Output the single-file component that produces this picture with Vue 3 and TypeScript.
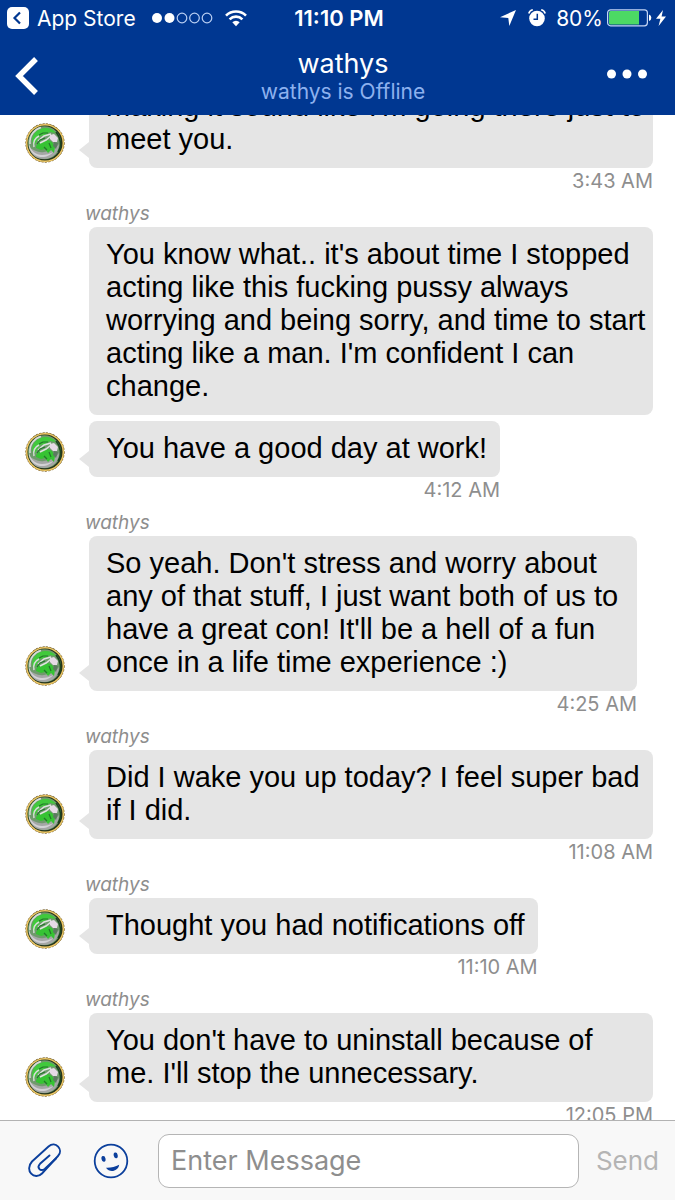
<script setup lang="ts">
import { ref } from 'vue'

interface Message {
  id: number
  text: string
  size: 'full' | 'wide' | 'fit'
  sender?: string
  time?: string
}

const contact = 'wathys'
const draft = ref('')

const messages: Message[] = [
  { id: 1, text: "making it sound like I'm going there just to\nmeet you.", size: 'full', time: '3:43 AM' },
  {
    id: 2,
    text: "You know what.. it's about time I stopped\nacting like this fucking pussy always\nworrying and being sorry, and time to start\nacting like a man. I'm confident I can\nchange.",
    size: 'full',
    sender: contact,
  },
  { id: 3, text: 'You have a good day at work!', size: 'fit', time: '4:12 AM' },
  {
    id: 4,
    text: "So yeah. Don't stress and worry about\nany of that stuff, I just want both of us to\nhave a great con! It'll be a hell of a fun\nonce in a life time experience :)",
    size: 'wide',
    sender: contact,
    time: '4:25 AM',
  },
  { id: 5, text: 'Did I wake you up today? I feel super bad\nif I did.', size: 'full', sender: contact, time: '11:08 AM' },
  { id: 6, text: 'Thought you had notifications off', size: 'fit', sender: contact, time: '11:10 AM' },
  {
    id: 7,
    text: "You don't have to uninstall because of\nme. I'll stop the unnecessary.",
    size: 'full',
    sender: contact,
    time: '12:05 PM',
  },
]
</script>

<template>
  <div class="app">
    <header class="top">
      <div class="status">
        <div class="status-left">
          <svg class="store" viewBox="0 0 22 22" aria-hidden="true">
            <rect width="22" height="22" rx="5" fill="#fff" />
            <path d="M13 5.500 7.500 11l5.500 5.500" fill="none" stroke="#003791" stroke-width="2.200" />
          </svg>
          <span class="store-label">App Store</span>
          <svg class="signal" viewBox="0 0 62 12" aria-hidden="true">
            <circle cx="6" cy="6" r="5" fill="#fff" />
            <circle cx="18.500" cy="6" r="5" fill="#fff" />
            <g fill="none" stroke="#b9cff3" stroke-width="1.200">
              <circle cx="31" cy="6" r="4.800" />
              <circle cx="43.500" cy="6" r="4.800" />
              <circle cx="56" cy="6" r="4.800" />
            </g>
          </svg>
          <svg class="wifi" viewBox="0 0 22 17" aria-hidden="true">
            <g fill="none" stroke="#fff" stroke-width="2.600">
              <path d="M1 5.600a14.200 14.200 0 0 1 20 0" />
              <path d="M4.600 9.300a9 9 0 0 1 12.800 0" />
            </g>
            <path d="M7.300 12.300a5.200 5.200 0 0 1 7.400 0L11 16.200z" fill="#fff" />
          </svg>
        </div>
        <div class="clock">11:10 PM</div>
        <div class="status-right">
          <svg class="location" viewBox="0 0 16 16" aria-hidden="true">
            <path d="M16 0 9.300 16 8.300 8 0 7.200z" fill="#fff" />
          </svg>
          <svg class="alarm" viewBox="0 0 18 18" aria-hidden="true">
            <circle cx="9" cy="9.500" r="7.800" fill="#fff" />
            <path d="M.8 4.500A5 5 0 0 1 4.800.8M17.200 4.500a5 5 0 0 0-4-3.700" fill="none" stroke="#fff" stroke-width="1.600" />
            <path d="M9.300 4.800v5.400H5.500" fill="none" stroke="#003791" stroke-width="1.500" />
          </svg>
          <span class="percent">80%</span>
          <svg class="battery" viewBox="0 0 45 18" aria-hidden="true">
            <rect x=".6" y=".8" width="39.800" height="16" rx="3" fill="none" stroke="#c5d6f5" stroke-width="1.200" />
            <path d="M3.500 2h28.500v13.600H3.500A1.500 1.500 0 0 1 2 14.100V3.500A1.500 1.500 0 0 1 3.500 2z" fill="#4cd964" />
            <path d="M42 5.500a3.500 3.500 0 0 1 0 6.600z" fill="#fff" />
          </svg>
          <svg class="bolt" viewBox="0 0 10 16" aria-hidden="true">
            <path d="M7 0 0 8.800h4.400L2.600 16 10 6.600H5.600z" fill="#fff" />
          </svg>
        </div>
      </div>
      <div class="nav">
        <button class="back" type="button" aria-label="Back">
          <svg viewBox="0 0 24 38" aria-hidden="true">
            <path d="M22 2 5 19l17 17" fill="none" stroke="#fff" stroke-width="5.400" />
          </svg>
        </button>
        <div class="title">
          <h1>{{ contact }}</h1>
          <p>{{ contact }} is Offline</p>
        </div>
        <button class="more" type="button" aria-label="More options">
          <svg viewBox="0 0 40 10" aria-hidden="true">
            <g fill="#fff">
              <circle cx="4.500" cy="5" r="4.500" />
              <circle cx="20" cy="5" r="4.500" />
              <circle cx="35.500" cy="5" r="4.500" />
            </g>
          </svg>
        </button>
      </div>
    </header>

    <main class="chat">
      <article v-for="m in messages" :key="m.id" class="message" :class="[m.size, { tight: !m.time }]">
        <div v-if="m.sender" class="sender">{{ m.sender }}</div>
        <div class="row">
          <svg v-if="m.time" class="avatar" viewBox="0 0 40 40" aria-hidden="true">
            <circle cx="20" cy="20" r="19.200" fill="#26351c" stroke="#8a6a2c" stroke-width="1" stroke-dasharray="2 1.500" />
            <circle cx="20" cy="20" r="18.300" fill="none" stroke="#eec765" stroke-width="1.500" />
            <circle cx="19.500" cy="19.800" r="16.500" fill="#6f9a6c" />
            <path d="M4 24c4 3 9 6 15 5s11-3 15-8c0 9-7 15-15 15S6 32 4 24z" fill="#a5a7a6" />
            <path d="M4 20c1 8 7 12 13 12 4 0 8-1 11-3-4 6-19 9-24-5z" fill="#d3d2d6" />
            <path d="M7 18C7 10 14 5 20 5c5 0 9 2 11 5l-6-1-5 3-5 1-3 5-3 5z" fill="#41c93c" />
            <path d="M11 25c0-4 3-6 7-6l5-2 4 2 3 5-1 6-3-3-3 3-3-4-4 1z" fill="#36c333" />
            <path d="M5 21C4 12 10 6 16 4.500M9 24c-1-5 1-9 5-11" fill="none" stroke="#d9dbda" stroke-width="1.500" />
            <path d="M13 18l6-5 7-2M15 20l6-3 5-4" fill="none" stroke="#dfe3df" stroke-width="1.500" />
            <path d="M14 12l4-2 5 0M12 21l3-4 5-2M19 24l3 3M24 20l2 5" fill="none" stroke="#23762a" stroke-width="1.200" />
            <path d="M25 12l4-1 4 4-1 4-4 0-3-3z" fill="#e6dae6" />
            <path d="M29 19l4 1-2 6-3-3z" fill="#5c7a60" />
            <path d="M31 9c5 6 6 14 2 20" fill="none" stroke="#1c4420" stroke-width="1.500" />
          </svg>
          <div class="bubble">{{ m.text }}</div>
        </div>
        <time v-if="m.time" class="time">{{ m.time }}</time>
      </article>
    </main>

    <form class="composer" @submit.prevent>
      <button class="attach" type="button" aria-label="Attach file">
        <svg viewBox="0 0 36 36" aria-hidden="true">
          <g fill="none" stroke="#0b3f9c" stroke-width="1.900" stroke-linecap="round">
            <path d="M5 18.500 21.500 3.500c7-6 15.500 3 9.500 9.500L15 30.500C7.500 38-3 27.500 5 18.500z" />
            <path d="M22.500 12.500 13 20.800c-3.500 3.500 0 8.200 4.700 5.200L29 15.500" />
          </g>
        </svg>
      </button>
      <button class="emoji" type="button" aria-label="Insert emoji">
        <svg viewBox="0 0 36 36" aria-hidden="true">
          <circle cx="18" cy="18" r="16.300" fill="none" stroke="#0b3f9c" stroke-width="1.800" />
          <ellipse cx="10.500" cy="15.800" rx="2" ry="2.900" transform="rotate(-12 10.500 15.800)" fill="#0b3f9c" />
          <ellipse cx="22.700" cy="12.300" rx="2" ry="2.900" transform="rotate(-12 22.700 12.300)" fill="#0b3f9c" />
          <path d="M13 24.800c5 .2 9-.8 13.200-3-1 6.500-9.400 8.700-13.200 3z" fill="#0b3f9c" />
        </svg>
      </button>
      <input v-model="draft" class="entry" type="text" placeholder="Enter Message" aria-label="Enter Message" />
      <button class="send" type="submit">Send</button>
    </form>
  </div>
</template>

<style>
body {
  margin: 0;
}
</style>

<style scoped>
.app {
  display: flex;
  flex-direction: column;
  height: 100vh;
  background: #fff;
  font-family: Inter, "Liberation Sans", sans-serif;
  overflow: hidden;
}
svg {
  display: block;
  flex: none;
}
button {
  display: flex;
  align-items: center;
  justify-content: center;
  padding: 0;
  border: 0;
  background: none;
  font-family: inherit;
}
.top {
  flex: none;
  height: 115px;
  background: #003791;
  color: #fff;
}
.status {
  display: grid;
  grid-template-columns: 1fr auto 1fr;
  align-items: center;
  height: 36px;
  padding: 0 9px 0 7px;
  font-size: 21px;
}
.status-left,
.status-right {
  display: flex;
  align-items: center;
}
.status-right {
  justify-content: flex-end;
}
.store {
  width: 22px;
  margin-right: 8px;
}
.signal {
  width: 62px;
  margin: 0 12px 0 15px;
}
.wifi {
  width: 22px;
}
.clock {
  padding-left: 5px;
  font-weight: 600;
  font-size: 22px;
}
.location {
  width: 16px;
}
.alarm {
  width: 18px;
  margin: 0 10px 0 12px;
}
.battery {
  width: 45px;
  margin: 0 4px;
}
.bolt {
  width: 10px;
}
.nav {
  display: grid;
  grid-template-columns: 80px 1fr 80px;
  height: 79px;
}
.back {
  justify-content: flex-start;
  padding-left: 14px;
}
.back svg {
  width: 24px;
}
.more {
  justify-content: flex-end;
  padding: 0 28px 4px 0;
}
.more svg {
  width: 40px;
}
.title {
  padding: 12px 0 0 11px;
  text-align: center;
}
.title h1 {
  margin: 0;
  font-size: 27px;
  line-height: 32px;
  font-weight: 400;
}
.title p {
  margin: 0;
  font-size: 21px;
  line-height: 24px;
  color: #8db1ee;
}
.chat {
  flex: 1;
  min-height: 0;
  overflow: hidden;
}
.message {
  display: flex;
  flex-direction: column;
  width: fit-content;
  max-width: calc(100% - 22px);
  box-sizing: border-box;
  padding-left: 25px;
}
.message:first-child {
  margin-top: -36px;
}
.message.full {
  width: calc(100% - 22px);
}
.message.wide {
  width: calc(100% - 38px);
}
.message.tight {
  margin-bottom: 6px;
}
.sender {
  height: 26px;
  padding-left: 60px;
  font-size: 19px;
  line-height: 26px;
  font-style: italic;
  color: #8e8e8e;
}
.row {
  display: flex;
  align-items: flex-end;
}
.avatar {
  width: 40px;
  margin-bottom: 5px;
}
.bubble {
  position: relative;
  flex: 1;
  min-width: 0;
  box-sizing: border-box;
  padding: 11px 8px 12px 17px;
  margin-left: 24px;
  border-radius: 8px;
  background: #e5e5e5;
  color: #000;
  font-family: "Liberation Sans", Arial, sans-serif;
  font-size: 29px;
  line-height: 33px;
  white-space: pre;
}
.fit .bubble {
  padding-right: 13px;
}
.tight .bubble {
  margin-left: 64px;
}
.message:not(.tight) .bubble::before {
  content: "";
  position: absolute;
  left: -10px;
  bottom: 10px;
  border: solid transparent;
  border-width: 8px 10px 8px 0;
  border-right-color: #e5e5e5;
}
.time {
  height: 33px;
  font-size: 20px;
  line-height: 27px;
  text-align: right;
  color: #8e8e8e;
}
.composer {
  display: flex;
  flex: none;
  align-items: center;
  height: 80px;
  box-sizing: border-box;
  border-top: 1px solid #b2b2b2;
  background: #f8f8f8;
}
.attach {
  margin-left: 27px;
}
.emoji {
  margin: 0 29px 0 30px;
}
.attach svg,
.emoji svg {
  width: 36px;
}
.entry {
  flex: 1;
  min-width: 0;
  height: 54px;
  box-sizing: border-box;
  padding: 0 12px;
  border: 1px solid #b5b5b5;
  border-radius: 11px;
  background: #fff;
  font-family: inherit;
  font-size: 27px;
  outline: none;
}
.entry::placeholder {
  color: #8e8e8e;
  opacity: 1;
}
.send {
  margin: 0 16px 0 17px;
  font-size: 26px;
  color: #b4b4b4;
}
</style>
